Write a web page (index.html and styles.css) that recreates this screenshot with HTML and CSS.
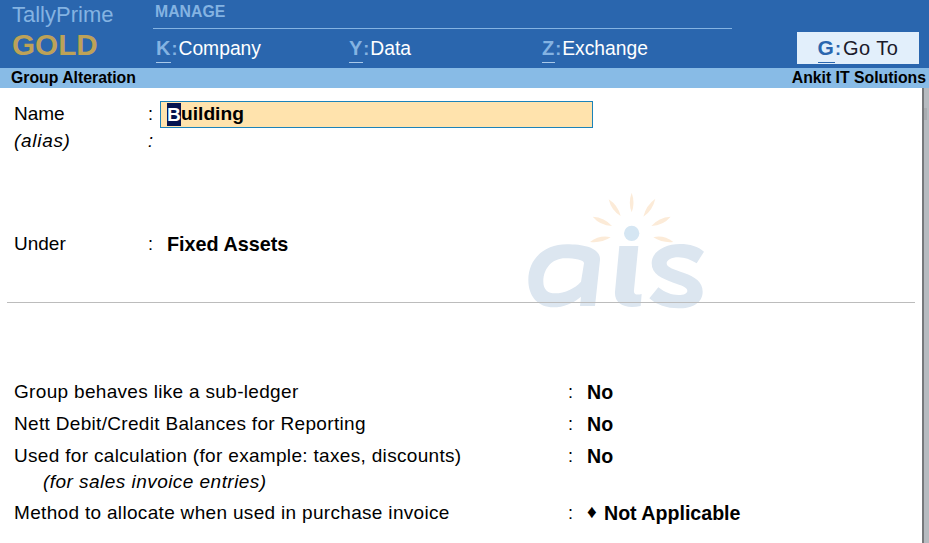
FILE: index.html
```html
<!DOCTYPE html>
<html lang="en">
<head>
<meta charset="utf-8">
<title>Group Alteration</title>
<link rel="stylesheet" href="styles.css">
</head>
<body>
<header class="topbar">
  <div class="brand">
    <div class="brand-name">TallyPrime</div>
    <div class="brand-edition">GOLD</div>
  </div>
  <div class="manage">
    <div class="manage-title">MANAGE</div>
    <nav class="menu">
      <div class="menu-item"><span class="key">K</span><span class="colon">:</span>Company</div>
      <div class="menu-item"><span class="key">Y</span><span class="colon">:</span>Data</div>
      <div class="menu-item"><span class="key">Z</span><span class="colon">:</span>Exchange</div>
    </nav>
  </div>
  <div class="goto"><span class="key">G</span><span class="colon">:</span>Go To</div>
</header>
<div class="titlebar">
  <span>Group Alteration</span>
  <span>Ankit IT Solutions</span>
</div>
<main class="content">
  <div class="form">
    <section class="upper">
      <div class="row row-name">
        <span class="label">Name</span><span class="sep">:</span>
        <div class="input"><span class="caret">B</span>uilding</div>
      </div>
      <div class="row row-alias">
        <span class="label italic">(alias)</span><span class="sep italic">:</span>
      </div>
      <div class="row row-under">
        <span class="label">Under</span><span class="sep">:</span><strong class="value">Fixed Assets</strong>
      </div>
    </section>
    <hr class="divider">
    <section class="lower">
      <div class="lrow"><span class="llabel">Group behaves like a sub-ledger</span><span class="sep">:</span><strong class="lvalue">No</strong></div>
      <div class="lrow"><span class="llabel">Nett Debit/Credit Balances for Reporting</span><span class="sep">:</span><strong class="lvalue">No</strong></div>
      <div class="lrow"><span class="llabel">Used for calculation (for example: taxes, discounts)</span><span class="sep">:</span><strong class="lvalue">No</strong></div>
      <div class="note italic">(for sales invoice entries)</div>
      <div class="lrow"><span class="llabel">Method to allocate when used in purchase invoice</span><span class="sep">:</span><strong class="lvalue"><span class="diamond">♦</span>Not Applicable</strong></div>
    </section>
    <svg class="watermark" viewBox="0 0 660 420" aria-hidden="true">
      <g fill="#fcebd8">
        <path d="M365 38 Q376 68 365 97 Q354 68 365 38Z"/>
        <path d="M296 58 Q324 76 332 108 Q304 92 296 58Z"/>
        <path d="M436 56 Q408 76 400 110 Q428 92 436 56Z"/>
        <path d="M248 110 Q284 112 306 138 Q270 136 248 110Z"/>
        <path d="M482 110 Q446 112 424 138 Q460 136 482 110Z"/>
        <path d="M240 186 Q270 164 302 172 Q274 190 240 186Z"/>
        <path d="M490 186 Q460 164 430 172 Q458 190 490 186Z"/>
      </g>
      <circle cx="365" cy="160" r="23" fill="#d5e6f3"/>
      <g fill="#dce6f0">
        <path fill-rule="evenodd" d="M170 193 C225 193 272 205 270 240 L255 378 L210 378 L213 350 C190 370 160 382 130 382 C85 382 55 350 55 300 C55 235 105 193 170 193Z M165 235 C130 235 100 262 100 305 C100 330 115 340 135 340 C165 340 195 325 213 305 L222 250 C222 240 195 235 165 235Z"/>
        <path d="M328 198 L385 198 L372 330 C370 345 380 345 395 342 L392 378 C350 388 312 375 315 335Z"/>
        <path d="M510 192 C540 192 565 200 582 215 L560 250 C540 238 525 232 505 232 C485 232 470 240 470 250 C470 262 490 268 520 278 C555 290 578 305 578 335 C578 370 545 385 505 385 C470 385 440 375 418 355 L445 322 C465 338 485 345 505 345 C522 345 532 340 532 332 C532 322 515 316 490 308 C455 296 425 282 425 250 C425 215 465 192 510 192Z"/>
      </g>
    </svg>
  </div>
  <div class="scrollbar"><div class="ghost"></div></div>
</main>
</body>
</html>
```
FILE: styles.css
```css
* { box-sizing: border-box; }
html, body { margin: 0; height: 100%; }
body {
  width: 929px;
  height: 543px;
  overflow: hidden;
  display: flex;
  flex-direction: column;
  font-family: "Liberation Sans", Arial, sans-serif;
  color: #000;
  background: #fff;
}
.topbar {
  height: 68px;
  flex: none;
  display: flex;
  background: #2a66ae;
}
.brand { width: 147px; padding: 1px 0 0 12px; }
.brand-name { font-size: 22px; line-height: 28px; color: #84b3e2; }
.brand-edition { font-size: 29.7px; line-height: 32px; font-weight: 700; color: #bda258; }
.manage { width: 579px; margin-left: 6px; }
.manage-title {
  height: 29px;
  padding: 3px 0 0 2px;
  font-size: 15.8px;
  line-height: 18px;
  font-weight: 700;
  color: #84b3e2;
  border-bottom: 1px solid #84b3e2;
}
.menu { display: flex; padding: 5px 0 0 3px; }
.menu-item { font-size: 19.3px; line-height: 28px; color: #fff; white-space: nowrap; width: 193px; flex: none; }
.key {
  display: inline-block;
  font-size: 20px;
  font-weight: 700;
  line-height: 28px;
  color: #84b3e2;
  position: relative;
  padding-right: 1px;
}
.key::after {
  content: "";
  position: absolute;
  left: 0;
  right: 0;
  bottom: -1px;
  height: 1px;
  background: #a9c9ea;
}
.colon { font-weight: 700; color: #84b3e2; margin-right: 1px; font-size: 18px; }
.goto {
  width: 122px;
  height: 32px;
  margin: 32px 0 0 65px;
  background: #e2effb;
  text-align: center;
  font-size: 20px;
  line-height: 31px;
  letter-spacing: .5px;
  color: #1a1a2a;
}
.goto .key, .goto .colon { color: #2a66ae; }
.goto .key { line-height: 31px; font-size: 21px; letter-spacing: 0; }
.goto .colon { margin-right: 2px; letter-spacing: 0; }
.goto .key::after { background: #2a66ae; bottom: 0; }
.titlebar {
  height: 20px;
  flex: none;
  display: flex;
  justify-content: space-between;
  padding: 0 3px 0 11px;
  background: #88bbe6;
  font-size: 15.8px;
  line-height: 19px;
  font-weight: 700;
}
.content { flex: 1; display: flex; min-height: 0; }
.form { flex: 1; position: relative; min-width: 0; }
.scrollbar {
  width: 7px;
  flex: none;
  background: #b6bbc0;
  border-left: 2px solid #77797c;
  padding-top: 20px;
}
.ghost { width: 3px; height: 12px; background: #a9adb1; }
.upper { height: 214px; padding: 13px 0 0 14px; }
.row { display: flex; font-size: 19px; line-height: 27px; height: 27px; position: relative; z-index: 1; }
.label { width: 134px; flex: none; line-height: 25px; }
.sep { width: 19px; flex: none; font-size: 18px; }
.italic { font-style: italic; }
.row-alias .label { letter-spacing: .7px; }
.input {
  width: 433px;
  height: 27px;
  border: 1px solid #1c83b9;
  background: #ffe3ad;
  padding-left: 6px;
  font-size: 19.2px;
  line-height: 24px;
  font-weight: 700;
  margin-left: -7px;
}
.caret { background: #04134f; color: #fff; display: inline-block; height: 23px; line-height: 23px; margin-top: 1px; vertical-align: top; width: 14px; text-align: center; }
.row-under { margin-top: 76px; }
.value { font-weight: 700; font-size: 19.8px; }
.divider {
  margin: 0 0 0 7px;
  width: 908px;
  height: 1px;
  border: 0;
  background: #bcbcbc;
  position: relative;
  z-index: 1;
}
.lower { padding: 76px 0 0 14px; position: relative; z-index: 1; }
.lrow { display: flex; font-size: 19px; letter-spacing: .32px; line-height: 27px; height: 32px; }
.lrow .sep { letter-spacing: 0; }
.llabel { width: 554px; flex: none; line-height: 25px; }
.lvalue { font-size: 19.6px; letter-spacing: 0; white-space: nowrap; }
.note { padding-left: 29px; font-size: 19px; letter-spacing: .46px; line-height: 20px; height: 28px; margin-top: -3px; }
.diamond { display: inline-block; width: 17px; font-size: 19px; vertical-align: 2px; line-height: 20px; }
.watermark {
  position: absolute;
  left: 510px;
  top: 92px;
  width: 220px;
  height: 140px;
}
```
